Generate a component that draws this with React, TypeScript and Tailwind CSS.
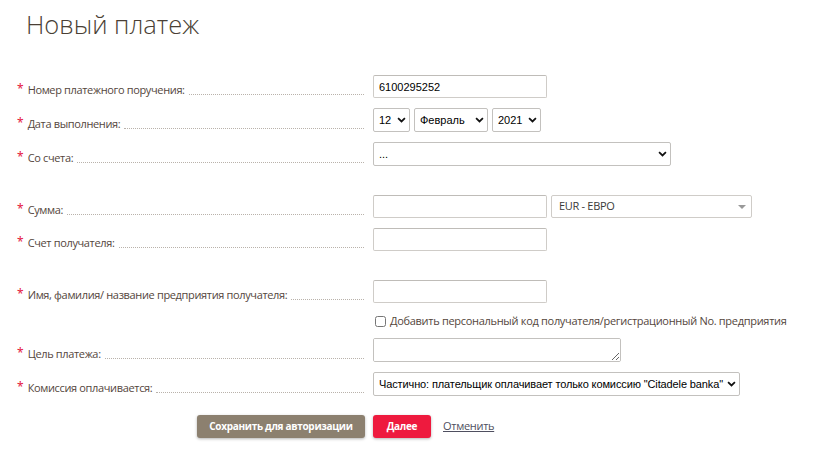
import type { ReactNode } from "react";

const OPEN = "font-['Open_Sans',sans-serif]";
const ARIAL = "font-['Liberation_Sans',Arial,sans-serif]";

function Chevron({ className = "" }: { className?: string }) {
  return (
    <svg
      viewBox="0 0 10 7"
      className={`pointer-events-none absolute top-1/2 -translate-y-1/2 w-[9px] h-[6px] ${className}`}
    >
      <path d="M1 1.2 L5 5.2 L9 1.2" fill="none" stroke="#111" strokeWidth="2" />
    </svg>
  );
}

function Row({
  label,
  children,
  className = "",
}: {
  label: string;
  children: ReactNode;
  className?: string;
}) {
  return (
    <div className={`flex items-end ${className}`}>
      <div className="flex items-end w-[364px] shrink-0 pl-[17px]">
        <span className="text-[#e4173e] text-[12px] leading-none self-start mt-[1px] mr-[4px]">*</span>
        <span
          className={`${OPEN} text-[11px] tracking-[-0.35px] leading-[16px] text-[#54463c] whitespace-nowrap`}
        >
          {label}
        </span>
        <span className="flex-1 ml-[4px] mb-[3px] border-b border-dotted border-[#b9b2ab]" />
      </div>
      <div className="ml-[9px] flex items-center gap-[4px]">{children}</div>
    </div>
  );
}

function NativeSelect({
  value,
  width,
  extra = "pr-[16px]",
}: {
  value: string;
  width: string;
  extra?: string;
}) {
  return (
    <div className={`relative ${width}`}>
      <select
        defaultValue={value}
        className={`${ARIAL} ${extra} block appearance-none w-full h-[24px] pl-[5px] text-[11px] text-black bg-white border border-[#c3c1be] rounded-[2px] outline-none`}
      >
        <option>{value}</option>
      </select>
      <Chevron className="right-[4px]" />
    </div>
  );
}

function TextInput({ value = "" }: { value?: string }) {
  return (
    <input
      defaultValue={value}
      className={`${ARIAL} block w-[174px] h-[23px] px-[5px] text-[11px] text-black bg-white border border-[#cfccc8] border-t-[#bfbcb8] rounded-[2px] outline-none`}
    />
  );
}

export default function App() {
  return (
    <div className="w-[830px] h-[456px] bg-white overflow-hidden">
      <h1
        className={`${OPEN} font-light text-[25.5px] leading-[30px] text-[#4a3f35] pl-[26px] pt-[9px]`}
      >
        Новый платеж
      </h1>

      <Row label="Номер платежного поручения:" className="mt-[36px]">
        <TextInput value="6100295252" />
      </Row>

      <Row label="Дата выполнения:" className="mt-[10px]">
        <NativeSelect value="12" width="w-[37px]" />
        <NativeSelect value="Февраль" width="w-[74px]" />
        <NativeSelect value="2021" width="w-[49px]" />
      </Row>

      <Row label="Со счета:" className="mt-[10px]">
        <NativeSelect value="..." width="w-[298px]" />
      </Row>

      <Row label="Сумма:" className="mt-[29px]">
        <TextInput />
        <div className="relative w-[201px] h-[23px] border border-[#cfccc8] bg-white rounded-[2px] flex items-center pl-[7px]">
          <span className={`${OPEN} text-[11px] tracking-[-0.3px] text-[#3a3a3a]`}>EUR - ЕВРО</span>
          <span className="absolute right-[5px] top-[9px] w-0 h-0 border-l-[4px] border-r-[4px] border-t-[4px] border-l-transparent border-r-transparent border-t-[#999]" />
        </div>
      </Row>

      <Row label="Счет получателя:" className="mt-[10px]">
        <TextInput />
      </Row>

      <Row label="Имя, фамилия/ название предприятия получателя:" className="mt-[29px]">
        <TextInput />
      </Row>

      <div className="mt-[10px] ml-[375px] flex items-center h-[16px]">
        <input type="checkbox" className="w-[11px] h-[11px] m-0 mr-[4px]" />
        <span
          className={`${OPEN} text-[11px] tracking-[-0.3px] leading-[16px] text-[#54463c] whitespace-nowrap`}
        >
          Добавить персональный код получателя/регистрационный No. предприятия
        </span>
      </div>

      <Row label="Цель платежа:" className="mt-[9px]">
        <textarea
          className="w-[248px] h-[24px] block bg-white border border-[#c3c1be] rounded-[2px] outline-none"
          rows={1}
        />
      </Row>

      <Row label="Комиссия оплачивается:" className="mt-[10px]">
        <NativeSelect
          value={'Частично: плательщик оплачивает только комиссию "Citadele banka"'}
          width="w-[367px]"
          extra="pr-[12px] tracking-[-0.12px]"
        />
      </Row>

      <div className="mt-[19px] flex items-center">
        <button
          className={`${OPEN} ml-[197px] w-[168px] h-[23px] rounded-[3px] bg-[#8c806f] text-white text-[10px] tracking-[-0.3px] font-bold shadow-[0_1px_3px_rgba(0,0,0,0.3)]`}
        >
          Сохранить для авторизации
        </button>
        <button
          className={`${OPEN} ml-[8px] w-[58px] h-[23px] rounded-[3px] bg-[#ee1a3e] text-white text-[10px] tracking-[-0.3px] font-bold shadow-[0_1px_3px_rgba(0,0,0,0.3)]`}
        >
          Далее
        </button>
        <a
          className={`${OPEN} ml-[12px] text-[11px] tracking-[-0.3px] underline text-[#4f4f60]`}
          href="#"
        >
          Отменить
        </a>
      </div>
    </div>
  );
}
